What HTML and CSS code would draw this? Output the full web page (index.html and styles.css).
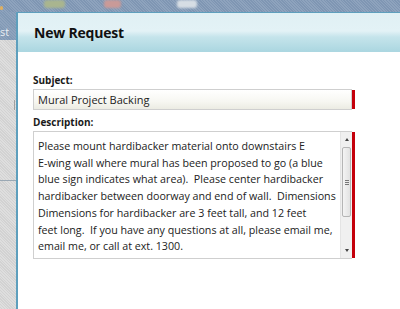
FILE: index.html
```html
<!DOCTYPE html>
<html>
<head>
<meta charset="utf-8">
<link rel="stylesheet" href="styles.css">
</head>
<body>
<div class="desk">
  <div class="topbar">
    <span class="blob blob-g"></span>
    <span class="blob blob-r"></span>
    <span class="blob blob-w"></span>
  </div>
  <div class="main">
    <div class="side">
      <div class="side-top"><span class="dot"></span><span class="side-text">st</span></div>
      <div class="side-bottom"><span class="tick"></span><span class="rule"></span></div>
    </div>
    <div class="dialog">
      <div class="header"><h1 class="title">New Request</h1></div>
      <div class="body">
        <label class="label">Subject:</label>
        <div class="field">
          <div class="input">Mural Project Backing</div>
          <span class="req"></span>
        </div>
        <label class="label label-desc">Description:</label>
        <div class="field">
          <div class="textarea">
            <div class="text">Please mount hardibacker material onto downstairs E<br>E-wing wall where mural has been proposed to go (a blue<br>blue sign indicates what area).&nbsp; Please center hardibacker<br>hardibacker between doorway and end of wall.&nbsp; Dimensions<br>Dimensions for hardibacker are 3 feet tall, and 12 feet<br>feet long.&nbsp; If you have any questions at all, please email me,<br>email me, or call at ext. 1300.</div>
            <div class="scroll">
              <span class="arrow arrow-up"></span>
              <div class="thumb"><span class="grip"></span><span class="grip"></span><span class="grip"></span></div>
              <span class="arrow arrow-down"></span>
            </div>
          </div>
          <span class="req"></span>
        </div>
      </div>
    </div>
  </div>
</div>
</body>
</html>
```
FILE: styles.css
```css
html, body { margin: 0; padding: 0; }
body {
  width: 400px; height: 309px; overflow: hidden;
  font-family: "Open Sans", "Noto Sans", sans-serif;
  background: #ffffff;
}
.desk { display: flex; flex-direction: column; height: 309px; }
.topbar {
  height: 12px; flex: none; position: relative;
  background: repeating-linear-gradient(45deg, #8ea3bd 0 1px, #7f96b3 1px 2px);
}
.blob { position: absolute; top: 0; height: 8px; border-radius: 3px; filter: blur(1px); }
.blob-g { left: 44px; width: 21px; background: #a9b58f; }
.blob-r { left: 104px; width: 17px; background: #c99a98; }
.blob-w { left: 177px; width: 20px; background: #d6dde4; }
.main { flex: 1; display: flex; min-height: 0; }
.side { width: 16px; flex: none; display: flex; flex-direction: column; }
.side-top {
  height: 28px; position: relative;
  background: repeating-linear-gradient(45deg, #8ea3bd 0 1px, #8199b5 1px 2px);
}
.dot { position: absolute; left: 0; top: -6px; width: 3px; height: 4px; background: #e0b060; border-radius: 2px; }
.side-text { position: absolute; left: 0; top: 14px; font-size: 11px; color: #e9eef4; line-height: 12px; }
.side-bottom {
  flex: 1; position: relative;
  background: repeating-linear-gradient(45deg, #dedede 0 1px, #d2d2d2 1px 2px);
}
.tick { position: absolute; right: 1px; top: 60px; width: 1px; height: 10px; background: #a0a0a0; }
.rule { position: absolute; left: 0; right: 0; top: 140px; height: 1px; background: #9aa8b4; }
.dialog {
  flex: 1; min-width: 0; display: flex; flex-direction: column;
  border-left: 2px solid #5e9fbd; border-top: 1px solid #5e9fbd;
  background: #ffffff;
}
.header {
  height: 39px; flex: none;
  background: linear-gradient(#e0f0f4 0, #e3f2f6 18px, #c5e4eb 24px, #acd7e1 38px);
  display: flex; align-items: center;
}
.title {
  margin: 0 0 0 16px; font-size: 14px; font-weight: 700; color: #111;
  font-family: "Open Sans", sans-serif; letter-spacing: -0.2px;
}
.body { padding: 22px 0 0 15px; display: flex; flex-direction: column; }
.label { font-size: 10px; font-weight: 700; color: #1a1a1a; line-height: 13px; height: 13px; }
.label-desc { margin-top: 6px; }
.field { display: flex; width: 322px; margin-top: 2px; }
.input {
  flex: 1; min-width: 0; height: 19px; border: 1px solid #cfcfcf;
  background: linear-gradient(#ffffff, #f7f7f2 60%, #ececE3);
  font-size: 11px; line-height: 19px; padding-left: 4px; color: #222;
}
.req { width: 3px; flex: none; background: #c4000a; margin: 1px 0; }
.textarea {
  flex: 1; min-width: 0; height: 126px; border: 1px solid #cfcfcf; border-right: none;
  display: flex;
}
.text {
  flex: 1; min-width: 0; padding: 6px 0 0 4px; font-size: 10.7px; line-height: 16.7px; color: #222;
  white-space: nowrap; overflow: hidden;
}
.scroll {
  width: 11px; flex: none; background: #f0f0f0; border-left: 1px solid #e4e4e4;
  display: flex; flex-direction: column; align-items: center;
}
.arrow { width: 0; height: 0; border-left: 2px solid transparent; border-right: 2px solid transparent; margin: 6px 0; }
.arrow-up { border-bottom: 3px solid #444; }
.arrow-down { border-top: 3px solid #444; margin-top: auto; }
.thumb {
  width: 9px; height: 70px; border: 1px solid #b5b5b5; border-radius: 2px;
  background: linear-gradient(90deg, #f4f4f4, #e2e2e2);
  display: flex; flex-direction: column; align-items: center; justify-content: center; gap: 1px;
  box-sizing: border-box;
}
.grip { width: 4px; height: 1px; background: #777; }
```
